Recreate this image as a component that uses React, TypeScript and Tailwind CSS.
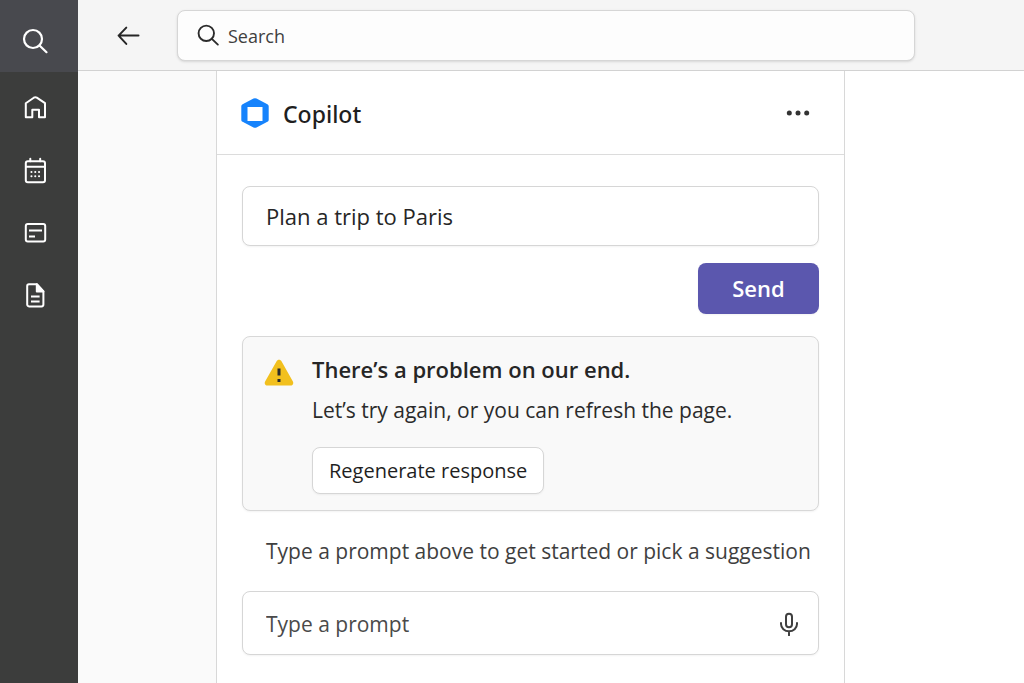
import React, { useState } from 'react';

interface IconProps {
  className?: string;
}

const SearchIcon: React.FC<IconProps> = ({ className }) => (
  <svg viewBox="0 0 28 28" fill="none" stroke="currentColor" strokeWidth="2.2" strokeLinecap="round" className={className}>
    <circle cx="12" cy="12" r="9" />
    <path d="M18.5 18.5 25.5 25.2" />
  </svg>
);

const HomeIcon: React.FC<IconProps> = ({ className }) => (
  <svg viewBox="0 0 28 28" fill="none" stroke="currentColor" strokeWidth="2" strokeLinejoin="round" className={className}>
    <path d="M4.8 24.3V10.2l8-5.5q1.5-.9 3 0l8.2 5.5v14.1h-6v-7.5h-6.7v7.5z" />
  </svg>
);

const CalendarIcon: React.FC<IconProps> = ({ className }) => (
  <svg viewBox="0 0 28 28" fill="none" stroke="currentColor" strokeWidth="2" strokeLinecap="round" className={className}>
    <rect x="4.8" y="5.2" width="19.2" height="21" rx="2" />
    <path d="M5 10.8h18.6M9.3 2.8v2.4M19.2 2.8v2.4" />
    <path d="M10.4 16h.1M14.2 16h.1M18 16h.1M10.4 20.2h.1M14.2 20.2h.1M18 20.2h.1" />
  </svg>
);

const CardIcon: React.FC<IconProps> = ({ className }) => (
  <svg viewBox="0 0 28 28" fill="none" stroke="currentColor" strokeWidth="2" className={className}>
    <rect x="4.8" y="5" width="19.4" height="17.4" rx="2" />
    <path d="M8 11.4h13M8 17.4h6" />
  </svg>
);

const DocumentIcon: React.FC<IconProps> = ({ className }) => (
  <svg viewBox="0 0 28 28" fill="none" stroke="currentColor" strokeWidth="2" strokeLinejoin="round" className={className}>
    <path d="M15.8 2.2H8A1.8 1.8 0 0 0 6.2 4v18.6A1.8 1.8 0 0 0 8 24.4h12.6a1.8 1.8 0 0 0 1.8-1.8V9.4z" />
    <path d="M15.8 2.2v7.2h6.6z" fill="currentColor" />
    <path d="M10 14.6h8.6M10 19.4h8.6" />
  </svg>
);

const BackIcon: React.FC<IconProps> = ({ className }) => (
  <svg viewBox="0 0 24 24" fill="none" stroke="currentColor" strokeWidth="2" strokeLinecap="round" strokeLinejoin="round" className={className}>
    <path d="M21.5 12.6H1.6M9.3 4.6l-7.7 8 7.7 8.3" />
  </svg>
);

const CopilotLogo: React.FC<IconProps> = ({ className }) => (
  <svg viewBox="0 0 28 30" className={className}>
    <path
      fillRule="evenodd"
      fill="#1683fc"
      d="M12.5.6a3.5 3.5 0 0 1 3 0l10.9 5.6c.9.5 1.3 1.2 1.3 2.1v13.4c0 .9-.4 1.6-1.3 2.1l-10.9 5.6a3.5 3.5 0 0 1-3 0L1.6 23.8C.7 23.3.3 22.6.3 21.7V8.3c0-.9.4-1.6 1.3-2.1zM6.5 9v14h15V9z"
    />
  </svg>
);

const WarningIcon: React.FC<IconProps> = ({ className }) => (
  <svg viewBox="0 0 30 27" className={className}>
    <path
      fill="#f2c01e"
      d="M12.6 2.2c1-2 3.8-2 4.9 0l11.4 20.3c1 1.9-.1 4-2.2 4H3.3c-2.1 0-3.2-2.1-2.2-4z"
    />
    <path fill="#2b2b2b" d="M13.5 9.5h3v7h-3zM13.5 20h3v3h-3z" />
  </svg>
);

const MicIcon: React.FC<IconProps> = ({ className }) => (
  <svg viewBox="0 0 24 24" fill="none" stroke="currentColor" strokeWidth="2" strokeLinecap="round" className={className}>
    <rect x="9" y="1.8" width="6" height="13.4" rx="3" />
    <path d="M4 11v1a8 7.3 0 0 0 16 0v-1M12 19.3v4" />
  </svg>
);

const navItems = [
  { label: 'Home', Icon: HomeIcon },
  { label: 'Calendar', Icon: CalendarIcon },
  { label: 'Messages', Icon: CardIcon },
  { label: 'Documents', Icon: DocumentIcon },
];

const Sidebar: React.FC = () => (
  <aside className="w-[78px] shrink-0 bg-[#3c3d3c] text-white">
    <div className="h-[72px] bg-[#48494e] pt-[27px] pl-[21px]">
      <button type="button" aria-label="Search" className="block">
        <SearchIcon className="size-7" />
      </button>
    </div>
    <nav className="flex flex-col items-start gap-[35px] pt-[21px] pl-[21px]">
      {navItems.map(({ label, Icon }) => (
        <button key={label} type="button" aria-label={label}>
          <Icon className="size-7" />
        </button>
      ))}
    </nav>
  </aside>
);

const TopBar: React.FC = () => (
  <header className="flex h-[71px] items-center border-b border-[#d2d2d2] bg-[#f5f5f5] pr-[109px] pl-[39px]">
    <button type="button" aria-label="Back" className="text-[#262626]">
      <BackIcon className="size-6" />
    </button>
    <label className="ml-9 flex h-[51px] flex-1 items-center gap-2 rounded-lg border border-[#d6d6d6] bg-[#fdfdfd] pl-[18px] shadow-sm">
      <SearchIcon className="size-6 shrink-0 text-[#2b2b2b]" />
      <input
        type="text"
        aria-label="Search"
        placeholder="Search"
        className="w-full bg-transparent pt-[2px] text-[18px] text-[#3a3a3a] outline-none placeholder:text-[#3f3f3f]"
      />
    </label>
  </header>
);

interface ErrorCardProps {
  title: string;
  message: string;
}

const ErrorCard: React.FC<ErrorCardProps> = ({ title, message }) => (
  <div role="alert" className="mt-[22px] flex gap-[18px] rounded-lg border border-[#d8d8d8] bg-[#f9f9f9] pt-4 pr-[22px] pb-4 pl-[21px] shadow-xs">
    <WarningIcon className="mt-[6px] h-[27px] w-[30px] shrink-0" />
    <div>
      <h2 className="text-[22px] leading-8 font-semibold text-[#262626]">{title}</h2>
      <p className="mt-[9px] text-[21px] leading-8 text-[#2b2b2b]">{message}</p>
      <button
        type="button"
        className="mt-[21px] h-[47px] rounded-lg border border-[#d6d6d6] bg-white px-4 text-[20px] text-[#1f1f1f] shadow-xs"
      >
        Regenerate response
      </button>
    </div>
  </div>
);

const CopilotPanel: React.FC = () => {
  const [message, setMessage] = useState('Plan a trip to Paris');
  const [prompt, setPrompt] = useState('');

  return (
    <section className="min-w-0 flex-1 border-x border-[#d8d8d8] bg-white">
      {/* Header */}
      <div className="flex h-[84px] items-center border-b border-[#dcdcdc] pr-[34px] pl-6">
        <CopilotLogo className="h-[30px] w-7" />
        <h1 className="ml-[14px] pt-[3px] font-['Noto_Sans',sans-serif] text-[23px] font-medium text-[#1f1f1f]">Copilot</h1>
        <button type="button" aria-label="More options" className="ml-auto text-[#333333]">
          <svg viewBox="0 0 24 24" fill="currentColor" className="size-6">
            <circle cx="3.3" cy="12" r="2.5" />
            <circle cx="12" cy="12" r="2.5" />
            <circle cx="20.7" cy="12" r="2.5" />
          </svg>
        </button>
      </div>

      <div className="flex flex-col px-[25px] pt-[31px]">
        <input
          type="text"
          aria-label="Message"
          value={message}
          onChange={(e) => setMessage(e.target.value)}
          className="h-[60px] w-full rounded-lg border border-[#d6d6d6] bg-white px-[23px] text-[22px] text-[#262626] shadow-xs outline-none"
        />
        <button
          type="button"
          className="mt-[17px] h-[51px] w-[121px] self-end rounded-lg bg-[#5b57ae] text-[22px] font-semibold text-white shadow-xs"
        >
          Send
        </button>

        <ErrorCard
          title="There’s a problem on our end."
          message="Let’s try again, or you can refresh the page."
        />

        <p className="mt-6 pl-6 text-[21px] leading-8 whitespace-nowrap text-[#3f3f3f]">
          Type a prompt above to get started or pick a suggestion
        </p>

        <div className="mt-6 flex h-[64px] items-center rounded-lg border border-[#d6d6d6] bg-white pt-[2px] pr-[17px] pl-[23px] shadow-xs">
          <input
            type="text"
            aria-label="Type a prompt"
            placeholder="Type a prompt"
            value={prompt}
            onChange={(e) => setPrompt(e.target.value)}
            className="min-w-0 flex-1 bg-transparent pt-[2px] text-[21px] text-[#262626] outline-none placeholder:text-[#4a4a4a]"
          />
          <button type="button" aria-label="Use microphone" className="text-[#3f3f3f]">
            <MicIcon className="size-6" />
          </button>
        </div>
      </div>
    </section>
  );
};

const App: React.FC = () => (
  <div className="flex min-h-screen bg-white font-['Open_Sans','Noto_Sans',sans-serif]">
    <Sidebar />
    <div className="flex min-w-0 flex-1 flex-col">
      <TopBar />
      <main className="flex flex-1">
        <div className="w-[138px] shrink bg-[#fafafa]" />
        <CopilotPanel />
        <div className="w-[179px] shrink" />
      </main>
    </div>
  </div>
);

export default App;
